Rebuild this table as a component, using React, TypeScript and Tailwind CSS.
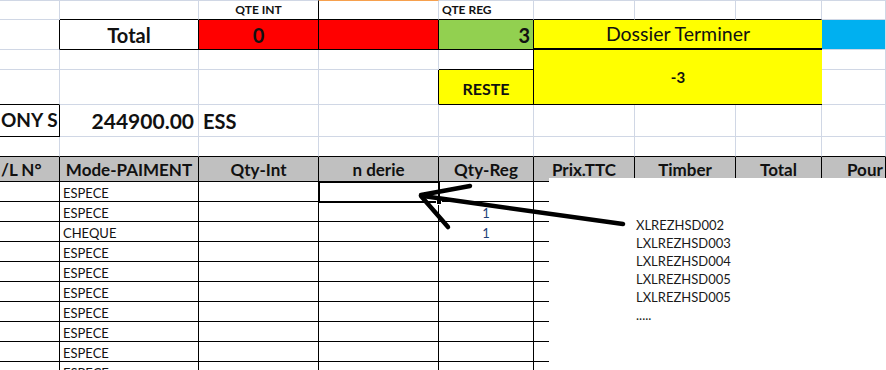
import React from "react";

type Edge = "g" | "k" | "n" | "k2";

const RIGHT: Record<Edge, string> = {
  g: "border-r border-r-[#D0D7E5]",
  k: "border-r border-r-black",
  k2: "border-r-2 border-r-black",
  n: "",
};

const BOTTOM: Record<Edge, string> = {
  g: "border-b border-b-[#D0D7E5]",
  k: "border-b border-b-black",
  k2: "border-b-2 border-b-black",
  n: "",
};

type CellProps = {
  r?: Edge;
  b?: Edge;
  className?: string;
  children?: React.ReactNode;
};

const Cell: React.FC<CellProps> = ({ r = "g", b = "g", className = "", children }) => (
  <div
    className={`flex items-center overflow-hidden whitespace-nowrap ${RIGHT[r]} ${BOTTOM[b]} ${className}`}
  >
    {children}
  </div>
);

const modes = [
  "ESPECE",
  "ESPECE",
  "CHEQUE",
  "ESPECE",
  "ESPECE",
  "ESPECE",
  "ESPECE",
  "ESPECE",
  "ESPECE",
  "ESPECE",
];

const qtyReg: Record<number, string> = { 1: "1", 2: "1" };

const serials = [
  "XLREZHSD002",
  "LXLREZHSD003",
  "LXLREZHSD004",
  "LXLREZHSD005",
  "LXLREZHSD005",
  ".....",
];

const headers = ["Qty-Int", "n derie", "Qty-Reg", "Prix.TTC", "Timber", "Total"];

export default function App() {
  return (
    <div className="relative w-[886px] h-[370px] overflow-hidden bg-white font-['Lato','Liberation_Sans',sans-serif] text-[#111]">
      <div className="grid grid-cols-[60px_139px_120px_120px_95px_101px_101px_86px_64px] grid-rows-[20px_30px_20px_35px_32px_20px_25px_repeat(10,20px)]">
        {/* summary header row */}
        <Cell className="border-t border-t-[#D0D7E5]" />
        <Cell b="k" className="border-t border-t-[#D0D7E5]" />
        <Cell r="k" b="k" className="justify-center border-t border-t-[#D0D7E5] text-[12px] font-bold">
          QTE INT
        </Cell>
        <Cell b="k" className="border-t border-t-[#F6A04D]" />
        <Cell b="k" className="border-t border-t-[#D0D7E5] pl-[3px] text-[12px] font-bold">
          QTE REG
        </Cell>
        <Cell b="k" className="border-t border-t-[#D0D7E5]" />
        <Cell b="k" className="border-t border-t-[#D0D7E5]" />
        <Cell b="k" className="border-t border-t-[#D0D7E5]" />
        <Cell className="border-t border-t-[#D0D7E5]" />

        {/* totals */}
        <Cell r="k" />
        <Cell r="k" b="k" className="justify-center text-[20px] font-bold">
          Total
        </Cell>
        <Cell r="k" b="k" className="justify-center bg-[#FF0000] text-[20px] font-bold">
          0
        </Cell>
        <Cell r="k" b="k" className="bg-[#FF0000]" />
        <Cell r="k" b="k" className="justify-end bg-[#92D050] pr-[3px] text-[20px] font-bold">
          3
        </Cell>
        <Cell r="n" b="k2" className="col-span-3 justify-center bg-[#FFFF00] text-[19.5px]">
          Dossier Terminer
        </Cell>
        <Cell className="bg-[#00B0F0]" />

        {/* reste */}
        <Cell />
        <Cell />
        <Cell />
        <Cell />
        <Cell r="k" b="k" />
        <Cell r="n" b="k" className="col-span-3 row-span-2 justify-center bg-[#FFFF00] text-[15px] font-bold">
          -3
        </Cell>
        <Cell />

        <Cell b="k" />
        <Cell />
        <Cell />
        <Cell r="k" />
        <Cell r="k" b="k" className="justify-center bg-[#FFFF00] pt-[3px] text-[16px] font-bold">
          RESTE
        </Cell>
        <Cell />

        {/* client line */}
        <Cell r="k" b="k" className="pl-[1px] text-[19px] font-bold">
          ONY S
        </Cell>
        <Cell className="justify-end pr-[4px] text-[21px] font-bold">244900.00</Cell>
        <Cell className="pl-[4px] text-[20px] font-bold">ESS</Cell>
        <Cell />
        <Cell />
        <Cell />
        <Cell />
        <Cell />
        <Cell />

        {[0, 1, 2, 3, 4, 5, 6, 7, 8].map((i) => (
          <Cell key={`sp${i}`} b="k" />
        ))}

        {/* table header */}
        <Cell r="k" b="k" className="bg-[#C0C0C0] pl-[1px] pt-[2px] text-[17px] font-bold">
          /L N°
        </Cell>
        <Cell r="k" b="k" className="justify-center bg-[#C0C0C0] pt-[2px] text-[17px] font-bold">
          Mode-PAIMENT
        </Cell>
        {headers.map((h) => (
          <Cell key={h} r="k" b="k" className="justify-center bg-[#C0C0C0] pt-[2px] text-[17px] font-bold">
            {h}
          </Cell>
        ))}
        <Cell r="k" b="k" className="bg-[#C0C0C0] pl-[25px] pt-[2px] text-[17px] font-bold">
          Pour
        </Cell>

        {/* payment rows */}
        {modes.map((m, i) => (
          <React.Fragment key={i}>
            <Cell r="k" b="k" />
            <Cell r="k" b="k" className="pl-[3px] pt-[4px] text-[13px]">
              {m}
            </Cell>
            <Cell r="k" b="k" />
            <Cell r="k" b="k" />
            <Cell r="k" b="k" className="justify-center pt-[4px] text-[13px] text-[#1F3F7A]">
              {qtyReg[i] ?? ""}
            </Cell>
            <Cell r="k" b="k" />
            <Cell r="k" b="k" />
            <Cell r="k" b="k" />
            <Cell r="k" b="k" />
          </React.Fragment>
        ))}
      </div>

      {/* active cell */}
      <div className="absolute left-[318px] top-[181px] h-[22px] w-[122px] border-2 border-black" />
      <div className="absolute left-[436px] top-[199px] h-[6px] w-[6px] border border-white bg-black" />

      {/* pasted note with serial numbers */}
      <div className="absolute left-[549px] top-[178px] right-0 bottom-0 bg-white pl-[87px] pt-[38px] text-[13px] leading-[18px] text-[#1a1a1a]">
        {serials.map((s, i) => (
          <div key={i}>{s}</div>
        ))}
      </div>

      {/* hand-drawn arrow */}
      <svg className="pointer-events-none absolute inset-0" width="886" height="370">
        <g stroke="black" strokeWidth="4.5" strokeLinecap="round" fill="none">
          <line x1="421" y1="195" x2="470" y2="186" />
          <line x1="423" y1="196" x2="623" y2="224" />
          <line x1="421" y1="196" x2="448" y2="227" />
        </g>
      </svg>
    </div>
  );
}
